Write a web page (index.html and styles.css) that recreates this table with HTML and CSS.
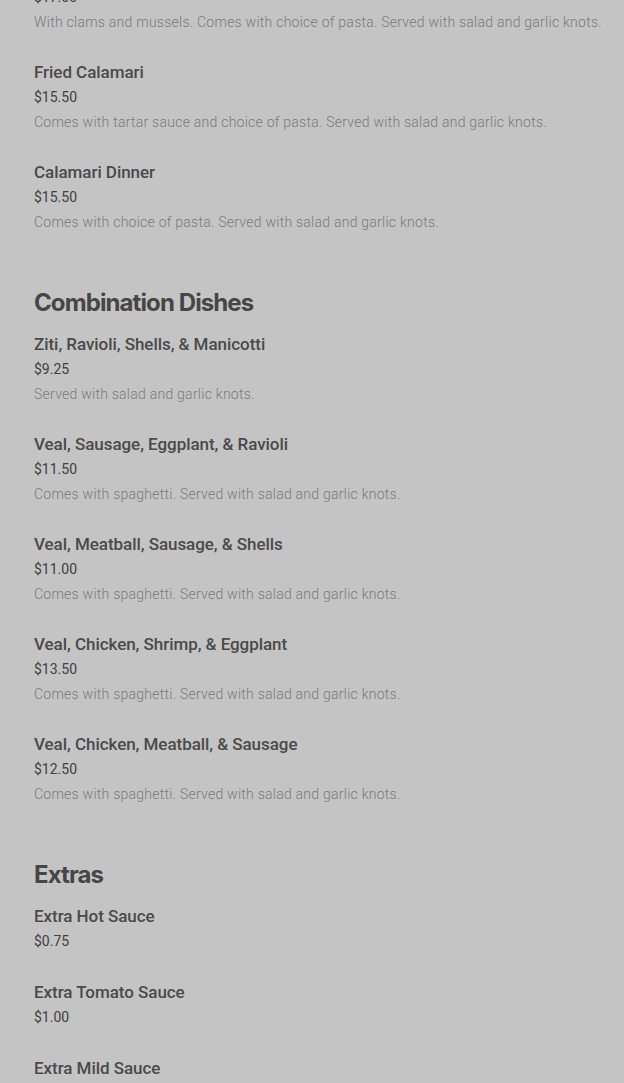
FILE: index.html
```html
<!DOCTYPE html>
<html>
<head>
<meta charset="utf-8">
<link rel="stylesheet" href="styles.css">
</head>
<body>
<main class="menu">
  <section class="section">
    <div class="item item-cut">
      <div class="price">$17.00</div>
      <div class="desc">With clams and mussels. Comes with choice of pasta. Served with salad and garlic knots.</div>
    </div>
    <div class="item">
      <div class="name">Fried Calamari</div>
      <div class="price">$15.50</div>
      <div class="desc">Comes with tartar sauce and choice of pasta. Served with salad and garlic knots.</div>
    </div>
    <div class="item">
      <div class="name">Calamari Dinner</div>
      <div class="price">$15.50</div>
      <div class="desc">Comes with choice of pasta. Served with salad and garlic knots.</div>
    </div>
  </section>

  <section class="section">
    <h2 class="heading">Combination Dishes</h2>
    <div class="item">
      <div class="name">Ziti, Ravioli, Shells, &amp; Manicotti</div>
      <div class="price">$9.25</div>
      <div class="desc">Served with salad and garlic knots.</div>
    </div>
    <div class="item">
      <div class="name">Veal, Sausage, Eggplant, &amp; Ravioli</div>
      <div class="price">$11.50</div>
      <div class="desc">Comes with spaghetti. Served with salad and garlic knots.</div>
    </div>
    <div class="item">
      <div class="name">Veal, Meatball, Sausage, &amp; Shells</div>
      <div class="price">$11.00</div>
      <div class="desc">Comes with spaghetti. Served with salad and garlic knots.</div>
    </div>
    <div class="item">
      <div class="name">Veal, Chicken, Shrimp, &amp; Eggplant</div>
      <div class="price">$13.50</div>
      <div class="desc">Comes with spaghetti. Served with salad and garlic knots.</div>
    </div>
    <div class="item">
      <div class="name">Veal, Chicken, Meatball, &amp; Sausage</div>
      <div class="price">$12.50</div>
      <div class="desc">Comes with spaghetti. Served with salad and garlic knots.</div>
    </div>
  </section>

  <section class="section">
    <h2 class="heading">Extras</h2>
    <div class="item">
      <div class="name">Extra Hot Sauce</div>
      <div class="price">$0.75</div>
    </div>
    <div class="item">
      <div class="name">Extra Tomato Sauce</div>
      <div class="price">$1.00</div>
    </div>
    <div class="item">
      <div class="name">Extra Mild Sauce</div>
      <div class="price">$1.00</div>
    </div>
  </section>
</main>
</body>
</html>
```
FILE: styles.css
```css
html, body {
  margin: 0;
  padding: 0;
  background: #c4c4c4;
}
body {
  font-family: Roboto, "Liberation Sans", sans-serif;
  overflow: hidden;
  height: 1083px;
}
.menu {
  padding: 0 10px 0 34px;
  display: flex;
  flex-direction: column;
  gap: 52px;
  margin-top: -15px;
}
.section {
  display: flex;
  flex-direction: column;
  gap: 26px;
}
.heading {
  margin: 0 0 -14px 0;
  font-family: Inter, "Liberation Sans", sans-serif;
  font-weight: 700;
  font-size: 24px;
  line-height: 34px;
  letter-spacing: -0.9px;
  color: #464646;
}
.item {
  display: flex;
  flex-direction: column;
}
.name {
  font-size: 17px;
  font-weight: 500;
  line-height: 25px;
  color: #4a4a4a;
  letter-spacing: -0.05px;
}
.price {
  font-size: 14px;
  line-height: 25px;
  color: #404040;
}
.desc {
  font-size: 14px;
  font-weight: 300;
  line-height: 24px;
  letter-spacing: 0.25px;
  color: #7a7a7a;
}
```
